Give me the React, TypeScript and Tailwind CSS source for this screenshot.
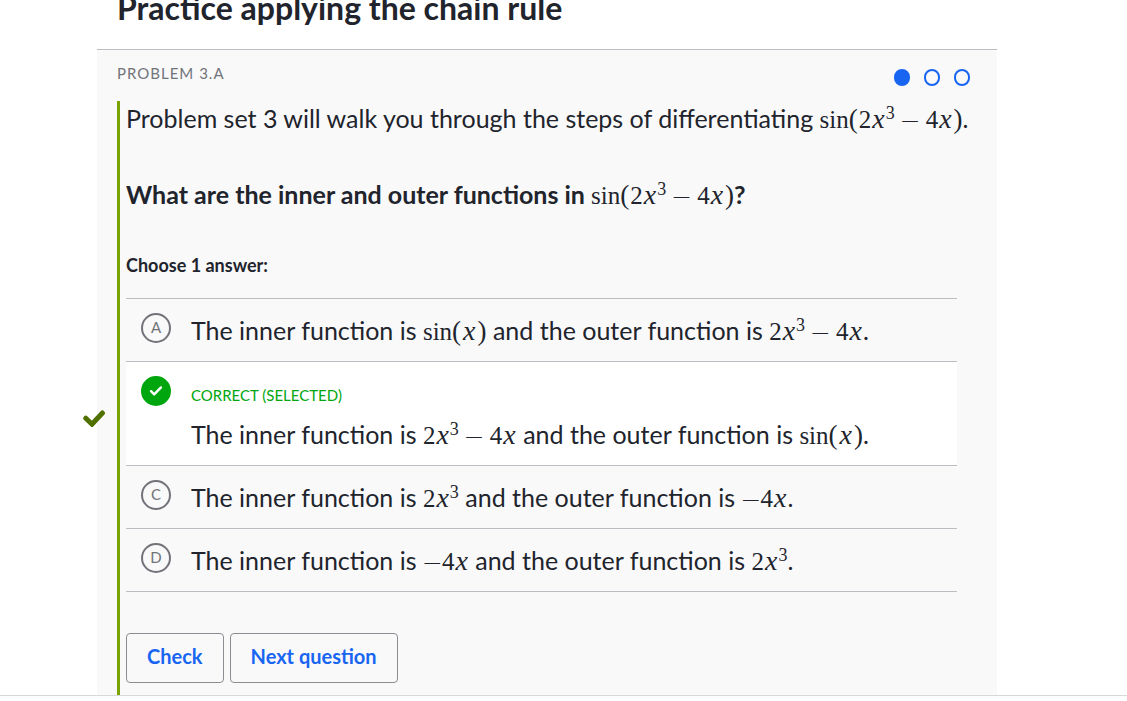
import { useState, type ReactNode } from "react";

function Var() {
  return <i className="mx-px text-[28px] leading-none">x</i>;
}

function Minus({ unary = false }: { unary?: boolean }) {
  return (
    <span
      className={
        unary
          ? "relative top-px -mx-px font-['DejaVu_Sans_Light','DejaVu_Sans',sans-serif] leading-none font-extralight"
          : "relative top-px mx-[5px] font-['DejaVu_Sans_Light','DejaVu_Sans',sans-serif] leading-none font-extralight"
      }
    >
      −
    </span>
  );
}

function Formula({ children }: { children: ReactNode }) {
  return (
    <span className="font-['Liberation_Serif',serif] text-[25px] leading-none font-normal whitespace-nowrap">
      {children}
    </span>
  );
}

function Parens({ children }: { children: ReactNode }) {
  return (
    <>
      <span className="mr-px text-[27px] leading-none">(</span>
      {children}
      <span className="ml-px text-[27px] leading-none">)</span>
    </>
  );
}

function Cubic() {
  return (
    <>
      2<Var />
      <sup className="-top-[9px] text-[18px]">3</sup>
    </>
  );
}

function Difference() {
  return (
    <>
      <Cubic />
      <Minus />4<Var />
    </>
  );
}

const sine = (
  <Formula>
    sin
    <Parens>
      <Var />
    </Parens>
  </Formula>
);
const cubic = (
  <Formula>
    <Cubic />
  </Formula>
);
const difference = (
  <Formula>
    <Difference />
  </Formula>
);
const linear = (
  <Formula>
    <Minus unary />4<Var />
  </Formula>
);
const composite = (
  <Formula>
    sin
    <Parens>
      <Difference />
    </Parens>
  </Formula>
);

const choices = [
  { letter: "A", inner: sine, outer: difference },
  { letter: "B", inner: difference, outer: sine },
  { letter: "C", inner: cubic, outer: linear },
  { letter: "D", inner: linear, outer: cubic },
];

export default function App() {
  const [selected, setSelected] = useState("B");
  const [step, setStep] = useState(0);

  return (
    <main className="overflow-x-hidden bg-white font-['Lato',sans-serif] text-[#21242c]">
      <div className="border-b border-[#d6d8da]">
        <div className="mr-4 ml-[97px] max-w-[900px]">
          <h1 className="-mt-3 mb-[22px] pl-5 text-[32px] leading-[39px] font-bold">Practice applying the chain rule</h1>
          <section className="border-t border-[#babec2] bg-[#f9f9f9] pl-5">
            <header className="flex h-[51px] items-start justify-between pt-[13px] pr-[27px]">
              <h2 className="text-[15px] leading-5 tracking-[1px] text-[#71747a]">PROBLEM 3.A</h2>
              <nav aria-label="Questions" className="flex gap-3.5 pt-1.5">
                {[0, 1, 2].map((index) => (
                  <button
                    key={index}
                    type="button"
                    aria-label={`Question ${index + 1}`}
                    onClick={() => setStep(index)}
                    className={`h-[17px] w-4 rounded-full border-2 border-[#1865f2] ${step === index ? "bg-[#1865f2]" : ""}`}
                  />
                ))}
              </nav>
            </header>

            <form className="relative border-l-3 border-[#78a300] pr-10 pb-3 pl-1.5" onSubmit={(e) => e.preventDefault()}>
              <svg
                viewBox="0 0 22 17"
                aria-hidden="true"
                className="absolute top-[309px] -left-[37px] h-[17px] w-[22px]"
              >
                <path d="M2.8 8.2 9 14.2 19.4 3" fill="none" stroke="#507000" strokeWidth="5" strokeLinejoin="miter" strokeLinecap="round" />
              </svg>
              <p className="-mr-10 text-[25px] leading-[34px]">
                Problem set 3 will walk you through the steps of differentiating {composite}.
              </p>
              <p className="mt-[42px] text-[25px] leading-[34px] font-bold">
                What are the inner and outer functions in {composite}?
              </p>
              <fieldset className="mt-[42px]">
                <legend className="text-[18px] leading-6 font-bold">Choose 1 answer:</legend>
                <div className="mt-[21px] border-t border-[#babec2]">
                  {choices.map(({ letter, inner, outer }) => {
                    const checked = selected === letter;
                    return (
                      <label
                        key={letter}
                        className={`flex items-start gap-5 border-b border-[#babec2] px-[15px] py-3.5 ${checked ? "bg-white" : ""}`}
                      >
                        <span className="grid size-[30px] shrink-0 place-items-center">
                          <input
                            type="radio"
                            name="answer"
                            value={letter}
                            checked={checked}
                            onChange={() => setSelected(letter)}
                            className="col-start-1 row-start-1 size-[30px] appearance-none rounded-full border-2 border-[#717378] checked:border-[#00a60e] checked:bg-[#00a60e]"
                          />
                          {checked ? (
                            <svg viewBox="0 0 14 12" aria-hidden="true" className="pointer-events-none col-start-1 row-start-1 h-3 w-3.5">
                              <path d="M2 6.2 5.2 9.4 12 2.4" fill="none" stroke="#fff" strokeWidth="2.4" strokeLinecap="round" strokeLinejoin="round" />
                            </svg>
                          ) : (
                            <span className="col-start-1 row-start-1 pb-0.5 text-[15px] leading-5 text-[#717378]">{letter}</span>
                          )}
                        </span>
                        <span className="flex flex-col">
                          {checked && (
                            <span className="pt-[9px] pb-3 text-[15px] leading-5 text-[#00a60e]">CORRECT (SELECTED)</span>
                          )}
                          <span className="text-[25px] leading-[34px]">
                            The inner function is {inner} and the outer function is {outer}.
                          </span>
                        </span>
                      </label>
                    );
                  })}
                </div>
              </fieldset>
              <div className="mt-[41px] flex gap-1.5">
                <button type="submit" className="h-[50px] rounded border border-[#8b8d92] px-5 pb-1 text-[20px] leading-6 font-bold text-[#1865f2]">
                  Check
                </button>
                <button
                  type="button"
                  onClick={() => setStep((step + 1) % 3)}
                  className="h-[50px] rounded border border-[#8b8d92] px-5 pb-1 text-[20px] leading-6 font-bold text-[#1865f2]"
                >
                  Next question
                </button>
              </div>
            </form>
          </section>
        </div>
      </div>
    </main>
  );
}
